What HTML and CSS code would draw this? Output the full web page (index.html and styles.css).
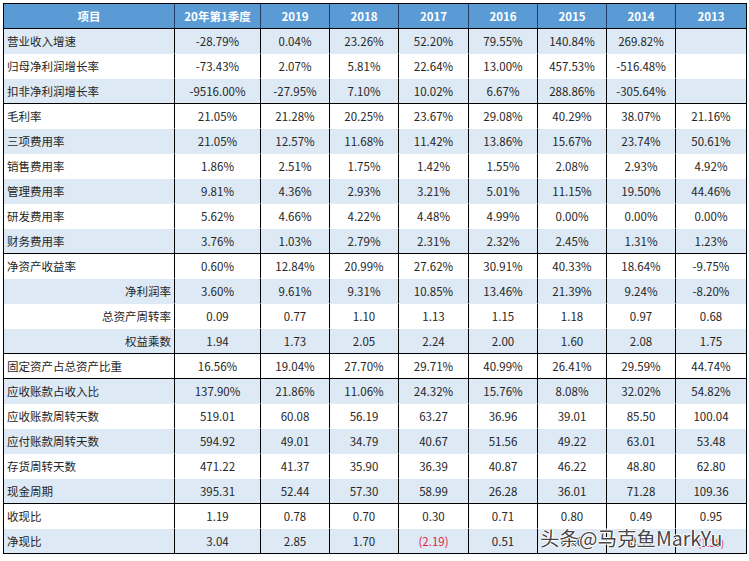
FILE: index.html
```html
<!DOCTYPE html>
<html lang="zh-CN">
<head>
<meta charset="utf-8">
<title>财务指标</title>
<link rel="stylesheet" href="styles.css">
</head>
<body>
<div class="wrap">
<table class="fin">
<colgroup>
<col class="c-name"><col class="c-q1"><col class="c-y"><col class="c-y"><col class="c-y2"><col class="c-y"><col class="c-y"><col class="c-y"><col class="c-y2">
</colgroup>
<thead>
<tr><th>项目</th><th>20年第1季度</th><th>2019</th><th>2018</th><th>2017</th><th>2016</th><th>2015</th><th>2014</th><th>2013</th></tr>
</thead>
<tbody>
<tr class="b"><td class="l">营业收入增速</td><td>-28.79%</td><td>0.04%</td><td>23.26%</td><td>52.20%</td><td>79.55%</td><td>140.84%</td><td>269.82%</td><td></td></tr>
<tr><td class="l">归母净利润增长率</td><td>-73.43%</td><td>2.07%</td><td>5.81%</td><td>22.64%</td><td>13.00%</td><td>457.53%</td><td>-516.48%</td><td></td></tr>
<tr class="b g"><td class="l">扣非净利润增长率</td><td>-9516.00%</td><td>-27.95%</td><td>7.10%</td><td>10.02%</td><td>6.67%</td><td>288.86%</td><td>-305.64%</td><td></td></tr>
<tr><td class="l">毛利率</td><td>21.05%</td><td>21.28%</td><td>20.25%</td><td>23.67%</td><td>29.08%</td><td>40.29%</td><td>38.07%</td><td>21.16%</td></tr>
<tr class="b"><td class="l">三项费用率</td><td>21.05%</td><td>12.57%</td><td>11.68%</td><td>11.42%</td><td>13.86%</td><td>15.67%</td><td>23.74%</td><td>50.61%</td></tr>
<tr><td class="l">销售费用率</td><td>1.86%</td><td>2.51%</td><td>1.75%</td><td>1.42%</td><td>1.55%</td><td>2.08%</td><td>2.93%</td><td>4.92%</td></tr>
<tr class="b"><td class="l">管理费用率</td><td>9.81%</td><td>4.36%</td><td>2.93%</td><td>3.21%</td><td>5.01%</td><td>11.15%</td><td>19.50%</td><td>44.46%</td></tr>
<tr><td class="l">研发费用率</td><td>5.62%</td><td>4.66%</td><td>4.22%</td><td>4.48%</td><td>4.99%</td><td>0.00%</td><td>0.00%</td><td>0.00%</td></tr>
<tr class="b g"><td class="l">财务费用率</td><td>3.76%</td><td>1.03%</td><td>2.79%</td><td>2.31%</td><td>2.32%</td><td>2.45%</td><td>1.31%</td><td>1.23%</td></tr>
<tr><td class="l">净资产收益率</td><td>0.60%</td><td>12.84%</td><td>20.99%</td><td>27.62%</td><td>30.91%</td><td>40.33%</td><td>18.64%</td><td>-9.75%</td></tr>
<tr class="b"><td class="r">净利润率</td><td>3.60%</td><td>9.61%</td><td>9.31%</td><td>10.85%</td><td>13.46%</td><td>21.39%</td><td>9.24%</td><td>-8.20%</td></tr>
<tr><td class="r">总资产周转率</td><td>0.09</td><td>0.77</td><td>1.10</td><td>1.13</td><td>1.15</td><td>1.18</td><td>0.97</td><td>0.68</td></tr>
<tr class="b g"><td class="r">权益乘数</td><td>1.94</td><td>1.73</td><td>2.05</td><td>2.24</td><td>2.00</td><td>1.60</td><td>2.08</td><td>1.75</td></tr>
<tr class="g"><td class="l">固定资产占总资产比重</td><td>16.56%</td><td>19.04%</td><td>27.70%</td><td>29.71%</td><td>40.99%</td><td>26.41%</td><td>29.59%</td><td>44.74%</td></tr>
<tr class="b"><td class="l">应收账款占收入比</td><td>137.90%</td><td>21.86%</td><td>11.06%</td><td>24.32%</td><td>15.76%</td><td>8.08%</td><td>32.02%</td><td>54.82%</td></tr>
<tr><td class="l">应收账款周转天数</td><td>519.01</td><td>60.08</td><td>56.19</td><td>63.27</td><td>36.96</td><td>39.01</td><td>85.50</td><td>100.04</td></tr>
<tr class="b"><td class="l">应付账款周转天数</td><td>594.92</td><td>49.01</td><td>34.79</td><td>40.67</td><td>51.56</td><td>49.22</td><td>63.01</td><td>53.48</td></tr>
<tr><td class="l">存货周转天数</td><td>471.22</td><td>41.37</td><td>35.90</td><td>36.39</td><td>40.87</td><td>46.22</td><td>48.80</td><td>62.80</td></tr>
<tr class="b g"><td class="l">现金周期</td><td>395.31</td><td>52.44</td><td>57.30</td><td>58.99</td><td>26.28</td><td>36.01</td><td>71.28</td><td>109.36</td></tr>
<tr><td class="l">收现比</td><td>1.19</td><td>0.78</td><td>0.70</td><td>0.30</td><td>0.71</td><td>0.80</td><td>0.49</td><td>0.95</td></tr>
<tr class="b last"><td class="l">净现比</td><td>3.04</td><td>2.85</td><td>1.70</td><td class="neg">(2.19)</td><td>0.51</td><td>0.36</td><td>0.49</td><td class="neg low">(1.38)</td></tr>
</tbody>
</table>
<div class="watermark">头条@马克鱼MarkYu</div>
</div>
</body>
</html>
```
FILE: styles.css
```css
html, body {
  margin: 0;
  padding: 0;
  background: #ffffff;
}
body {
  padding: 3px 0 0 3px;
  font-family: "Noto Sans CJK SC", "Noto Sans", sans-serif;
  color: #262626;
}
.wrap {
  position: relative;
  width: 743px;
}
.fin {
  border-collapse: separate;
  border-spacing: 0;
  table-layout: fixed;
  width: 743px;
  border: 1px solid #000000;
  font-size: 11.5px;
}
.c-name { width: 171px; }
.c-q1 { width: 86px; }
.c-y { width: 69px; }
.c-y2 { width: 70px; }

.fin th, .fin td {
  height: 24px;
  padding: 0;
  line-height: 24px;
  text-align: center;
  white-space: nowrap;
  overflow: hidden;
  border-right: 1px solid #000000;
  border-bottom: 1px solid #ffffff;
}
.fin th:last-child, .fin td:last-child {
  border-right: none;
}
.fin th {
  background: #5b9bd5;
  color: #ffffff;
  font-weight: bold;
  border-right-color: #1f3f66;
  border-bottom: 1px solid #000000;
}
.fin tr.b td {
  background: #dde9f5;
  border-bottom-color: #dde9f5;
}
.fin tr.g td {
  border-bottom-color: #000000;
}
.fin tr.last td {
  border-bottom: none;
}
.fin td.l {
  text-align: left;
  padding-left: 3px;
}
.fin td.r {
  text-align: right;
  padding-right: 3px;
}
.fin td.neg {
  color: #e3223f;
}
.fin td.low {
  font-size: 10px;
  padding-top: 3px;
  line-height: 21px;
  height: 21px;
}
.watermark {
  position: absolute;
  left: 537px;
  top: 522px;
  font-family: "Noto Sans CJK SC", "Noto Sans", sans-serif;
  font-size: 19.5px;
  line-height: 26px;
  color: rgba(45, 45, 45, 0.9);
  text-shadow: 1px 0 0 #ffffff, -1px 0 0 #ffffff, 0 1px 0 #ffffff, 0 -1px 0 #ffffff;
  white-space: nowrap;
}
```
